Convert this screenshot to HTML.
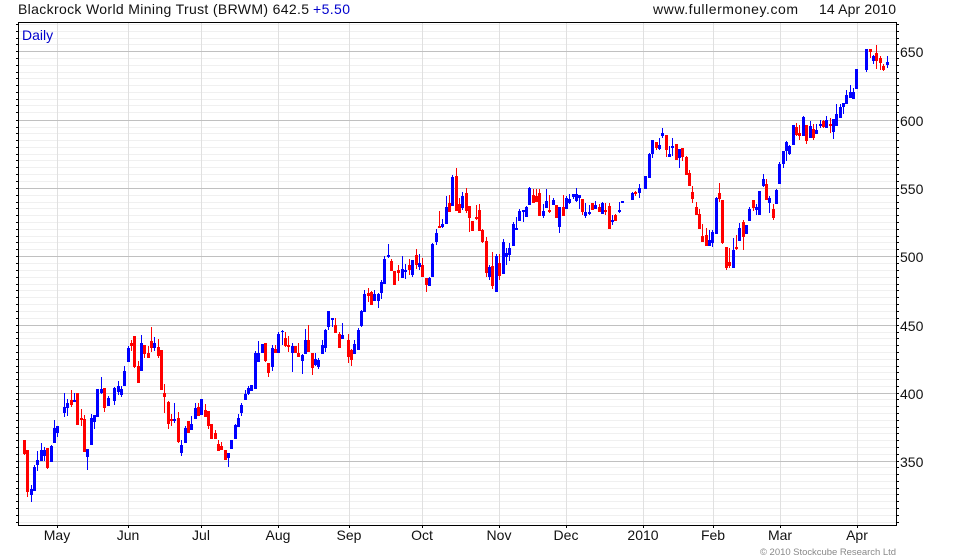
<!DOCTYPE html>
<html><head><meta charset="utf-8"><title>BRWM</title>
<style>html,body{margin:0;padding:0;background:#fff;width:980px;height:560px;overflow:hidden}svg{display:block}text{font-family:"Liberation Sans",Arial,sans-serif;font-size:14px;fill:#111}</style>
</head><body>
<svg width="980" height="560" viewBox="0 0 980 560" xmlns="http://www.w3.org/2000/svg">
<g shape-rendering="crispEdges" fill="none">
<path stroke="#f0f0f0" d="M19 24.5H896M19 31.5H896M19 38.5H896M19 44.5H896M19 58.5H896M19 65.5H896M19 72.5H896M19 78.5H896M19 85.5H896M19 92.5H896M19 99.5H896M19 105.5H896M19 112.5H896M19 127.5H896M19 133.5H896M19 140.5H896M19 147.5H896M19 154.5H896M19 160.5H896M19 167.5H896M19 174.5H896M19 181.5H896M19 195.5H896M19 202.5H896M19 208.5H896M19 215.5H896M19 222.5H896M19 229.5H896M19 236.5H896M19 242.5H896M19 249.5H896M19 263.5H896M19 270.5H896M19 277.5H896M19 284.5H896M19 290.5H896M19 297.5H896M19 304.5H896M19 311.5H896M19 318.5H896M19 332.5H896M19 338.5H896M19 345.5H896M19 352.5H896M19 359.5H896M19 366.5H896M19 372.5H896M19 379.5H896M19 386.5H896M19 399.5H896M19 406.5H896M19 413.5H896M19 420.5H896M19 427.5H896M19 433.5H896M19 440.5H896M19 447.5H896M19 454.5H896M19 467.5H896M19 474.5H896M19 481.5H896M19 488.5H896M19 494.5H896M19 501.5H896M19 508.5H896M19 515.5H896M19 522.5H896"/>
<path stroke="#e0e0e0" d="M57.5 23V525M128.5 23V525M201.5 23V525M278.5 23V525M349.5 23V525M422.5 23V525M499.5 23V525M566.5 23V525M643.5 23V525M713.5 23V525M780.5 23V525M857.5 23V525"/>
<path stroke="#c0c0c0" d="M19 51.5H896M19 120.5H896M19 188.5H896M19 256.5H896M19 325.5H896M19 393.5H896M19 461.5H896"/>
<path stroke="#000" d="M18 22.5H897M18 525.5H897M18.5 22V526M896.5 22V526"/>
<path stroke="#000" d="M16 24.5H18M16 31.5H18M16 38.5H18M16 44.5H18M16 51.5H18M16 58.5H18M16 65.5H18M16 72.5H18M16 78.5H18M16 85.5H18M16 92.5H18M16 99.5H18M16 105.5H18M16 112.5H18M16 120.5H18M16 127.5H18M16 133.5H18M16 140.5H18M16 147.5H18M16 154.5H18M16 160.5H18M16 167.5H18M16 174.5H18M16 181.5H18M16 188.5H18M16 195.5H18M16 202.5H18M16 208.5H18M16 215.5H18M16 222.5H18M16 229.5H18M16 236.5H18M16 242.5H18M16 249.5H18M16 256.5H18M16 263.5H18M16 270.5H18M16 277.5H18M16 284.5H18M16 290.5H18M16 297.5H18M16 304.5H18M16 311.5H18M16 318.5H18M16 325.5H18M16 332.5H18M16 338.5H18M16 345.5H18M16 352.5H18M16 359.5H18M16 366.5H18M16 372.5H18M16 379.5H18M16 386.5H18M16 393.5H18M16 399.5H18M16 406.5H18M16 413.5H18M16 420.5H18M16 427.5H18M16 433.5H18M16 440.5H18M16 447.5H18M16 454.5H18M16 461.5H18M16 467.5H18M16 474.5H18M16 481.5H18M16 488.5H18M16 494.5H18M16 501.5H18M16 508.5H18M16 515.5H18M16 522.5H18"/>
<path stroke="#000" d="M897 24.5H899M897 31.5H899M897 38.5H899M897 44.5H899M897 51.5H899M897 58.5H899M897 65.5H899M897 72.5H899M897 78.5H899M897 85.5H899M897 92.5H899M897 99.5H899M897 105.5H899M897 112.5H899M897 120.5H899M897 127.5H899M897 133.5H899M897 140.5H899M897 147.5H899M897 154.5H899M897 160.5H899M897 167.5H899M897 174.5H899M897 181.5H899M897 188.5H899M897 195.5H899M897 202.5H899M897 208.5H899M897 215.5H899M897 222.5H899M897 229.5H899M897 236.5H899M897 242.5H899M897 249.5H899M897 256.5H899M897 263.5H899M897 270.5H899M897 277.5H899M897 284.5H899M897 290.5H899M897 297.5H899M897 304.5H899M897 311.5H899M897 318.5H899M897 325.5H899M897 332.5H899M897 338.5H899M897 345.5H899M897 352.5H899M897 359.5H899M897 366.5H899M897 372.5H899M897 379.5H899M897 386.5H899M897 393.5H899M897 399.5H899M897 406.5H899M897 413.5H899M897 420.5H899M897 427.5H899M897 433.5H899M897 440.5H899M897 447.5H899M897 454.5H899M897 461.5H899M897 467.5H899M897 474.5H899M897 481.5H899M897 488.5H899M897 494.5H899M897 501.5H899M897 508.5H899M897 515.5H899M897 522.5H899"/>
<path stroke="#000" d="M57.5 526V528M128.5 526V528M201.5 526V528M278.5 526V528M349.5 526V528M422.5 526V528M499.5 526V528M566.5 526V528M643.5 526V528M713.5 526V528M780.5 526V528M857.5 526V528"/>

<path stroke="#ff0000" stroke-width="1" d="M24.5 440V455M27.5 450V497M47.5 448V469M71.5 390V407M77.5 393V425M81.5 409V426M84.5 415V452M104.5 388V412M131.5 340V351M134.5 336V368M138.5 361V383M144.5 345V358M148.5 346V358M151.5 327V352M158.5 339V358M161.5 350V390M164.5 384V413M168.5 401V429M171.5 414V426M178.5 412V443M188.5 421V433M198.5 403V416M205.5 404V417M208.5 411V429M211.5 424V439M215.5 430V439M218.5 440V451M221.5 442V450M225.5 450V460M265.5 343V362M268.5 363V377M275.5 345V353M285.5 332V347M288.5 336V352M295.5 346V353M298.5 343V357M308.5 325V352M312.5 353V375M335.5 318V333M339.5 332V348M348.5 334V363M351.5 349V366M368.5 288V302M371.5 291V305M391.5 259V271M394.5 271V285M398.5 265V281M409.5 259V275M416.5 249V269M422.5 258V277M426.5 278V292M439.5 211V228M449.5 195V212M456.5 168V211M459.5 198V213M466.5 188V213M469.5 206V232M472.5 221V231M476.5 205V220M479.5 204V231M482.5 229V243M486.5 237V277M492.5 252V289M499.5 254V280M533.5 189V203M536.5 189V202M539.5 189V216M549.5 195V213M556.5 205V218M563.5 195V216M582.5 199V215M592.5 203V210M599.5 204V212M605.5 203V215M609.5 203V229M615.5 214V221M635.5 191V196M656.5 142V150M666.5 135V157M676.5 144V160M682.5 148V161M686.5 156V175M689.5 170V186M692.5 186V203M696.5 202V215M699.5 209V229M702.5 224V242M706.5 228V246M719.5 183V202M722.5 200V244M726.5 247V270M729.5 248V268M736.5 235V250M743.5 220V250M753.5 200V211M766.5 179V200M773.5 204V220M796.5 123V136M799.5 125V140M806.5 125V144M813.5 124V140M823.5 120V128M830.5 118V133M870.5 49V58M876.5 45V69M880.5 56V70M883.5 64V71"/>
<path stroke="#ff0000" stroke-width="3" d="M24.5 440V454M27.5 450V492M47.5 448V468M71.5 400V405M77.5 393V425M81.5 418V420M84.5 419V452M104.5 388V408M131.5 343V346M134.5 336V367M138.5 366V383M144.5 345V354M148.5 353V358M151.5 341V348M158.5 347V356M161.5 350V390M164.5 393V397M168.5 402V424M171.5 419V421M178.5 418V442M188.5 421V433M198.5 407V416M205.5 410V417M208.5 411V426M211.5 424V439M215.5 433V439M218.5 444V451M221.5 446V450M225.5 450V460M265.5 343V361M268.5 363V373M275.5 349V353M285.5 338V346M288.5 345V347M295.5 346V353M298.5 353V357M308.5 340V352M312.5 353V368M335.5 325V333M339.5 334V348M348.5 340V357M351.5 350V360M368.5 293V296M371.5 292V305M391.5 261V271M394.5 271V285M398.5 270V273M409.5 265V270M416.5 255V265M422.5 265V277M426.5 278V285M439.5 226V228M449.5 203V212M456.5 176V211M459.5 204V213M466.5 193V211M469.5 206V218M472.5 221V231M476.5 217V219M479.5 210V231M482.5 230V242M486.5 241V273M492.5 266V286M499.5 263V276M533.5 195V203M536.5 196V202M539.5 193V216M549.5 210V212M556.5 205V218M563.5 207V216M582.5 199V212M592.5 203V210M599.5 207V212M605.5 210V212M609.5 206V229M615.5 215V221M635.5 192V194M656.5 142V148M666.5 135V150M676.5 144V160M682.5 148V157M686.5 157V175M689.5 173V186M692.5 192V199M696.5 207V215M699.5 214V229M702.5 236V242M706.5 235V246M719.5 193V199M722.5 200V243M726.5 247V268M729.5 262V266M736.5 247V249M743.5 222V237M753.5 200V208M766.5 184V200M773.5 209V218M796.5 127V135M799.5 133V136M806.5 125V141M813.5 129V138M823.5 121V127M830.5 124V126M870.5 49V52M876.5 53V61M880.5 58V63M883.5 66V70"/>
<path stroke="#0000ff" stroke-width="1" d="M31.5 485V502M34.5 465V491M37.5 451V471M41.5 443V461M44.5 447V461M51.5 445V462M54.5 420V443M57.5 426V437M64.5 393V417M67.5 399V416M74.5 393V402M87.5 449V470M91.5 414V445M94.5 415V429M97.5 389V417M101.5 377V394M108.5 396V406M114.5 387V405M118.5 381V395M121.5 386V397M124.5 366V386M128.5 346V362M141.5 335V371M154.5 337V351M174.5 403V423M181.5 440V456M185.5 426V443M191.5 416V430M195.5 403V419M201.5 399V415M228.5 453V467M231.5 440V449M235.5 424V439M238.5 414V427M241.5 403V416M245.5 390V400M248.5 386V395M251.5 385V391M255.5 351V389M258.5 341V362M262.5 344V353M272.5 345V371M278.5 332V353M282.5 330V345M292.5 343V372M302.5 354V374M305.5 329V354M315.5 353V366M318.5 358V369M322.5 340V354M325.5 329V352M328.5 311V330M332.5 318V327M342.5 323V339M354.5 340V354M358.5 328V350M361.5 310V327M364.5 290V312M374.5 290V301M378.5 293V308M381.5 280V299M384.5 256V284M388.5 244V258M402.5 256V278M405.5 264V279M412.5 260V277M419.5 254V270M429.5 277V286M432.5 243V277M436.5 229V245M442.5 219V228M446.5 196V224M452.5 175V206M462.5 192V210M489.5 265V280M496.5 254V292M503.5 239V274M506.5 248V265M509.5 243V261M513.5 222V246M516.5 217V230M519.5 209V221M523.5 210V222M526.5 206V217M529.5 187V205M543.5 204V218M546.5 189V208M553.5 198V205M559.5 207V233M566.5 196V209M569.5 194V204M573.5 194V199M576.5 188V202M579.5 195V209M585.5 203V218M589.5 205V215M595.5 201V209M602.5 202V214M612.5 215V225M619.5 202V213M622.5 201V203M632.5 192V200M639.5 184V198M645.5 176V189M649.5 153V178M652.5 140V158M659.5 138V150M662.5 128V138M669.5 146V157M672.5 138V156M679.5 149V168M709.5 230V246M712.5 230V247M716.5 197V234M733.5 238V268M739.5 223V241M746.5 225V234M749.5 207V221M756.5 204V215M759.5 191V215M763.5 174V187M769.5 196V213M776.5 189V204M779.5 162V184M783.5 151V168M786.5 141V161M789.5 145V155M793.5 125V145M803.5 116V136M810.5 121V138M816.5 124V134M820.5 120V128M826.5 116V128M833.5 119V139M836.5 104V126M840.5 104V118M843.5 103V114M846.5 90V104M850.5 85V98M853.5 88V99M856.5 69V89M866.5 49V72M873.5 55V64M887.5 56V68"/>
<path stroke="#0000ff" stroke-width="3" d="M31.5 489V495M34.5 467V491M37.5 460V465M41.5 450V461M44.5 450V456M51.5 446V462M54.5 428V443M57.5 426V433M64.5 407V413M67.5 403V408M74.5 400V402M87.5 449V457M91.5 418V445M94.5 415V422M97.5 389V417M101.5 389V393M108.5 398V406M114.5 388V401M118.5 386V392M121.5 389V395M124.5 371V386M128.5 348V362M141.5 343V371M154.5 343V348M174.5 419V421M181.5 445V453M185.5 428V443M191.5 424V430M195.5 408V419M201.5 399V415M228.5 453V458M231.5 440V449M235.5 425V439M238.5 418V427M241.5 405V413M245.5 394V400M248.5 388V394M251.5 385V391M255.5 353V389M258.5 353V362M262.5 344V353M272.5 348V367M278.5 334V353M282.5 331V332M292.5 346V353M302.5 355V361M305.5 340V354M315.5 359V365M318.5 360V367M322.5 345V354M325.5 330V348M328.5 311V327M332.5 318V320M342.5 335V339M354.5 344V354M358.5 330V350M361.5 311V326M364.5 294V312M374.5 294V301M378.5 294V301M381.5 282V293M384.5 259V284M388.5 255V257M402.5 269V278M405.5 270V272M412.5 260V275M419.5 263V267M429.5 278V286M432.5 244V277M436.5 233V242M442.5 224V227M446.5 207V224M452.5 177V206M462.5 196V208M489.5 267V277M496.5 256V292M503.5 242V274M506.5 253V257M509.5 248V255M513.5 224V246M516.5 228V230M519.5 211V221M523.5 210V212M526.5 207V217M529.5 188V205M543.5 211V216M546.5 201V208M553.5 200V205M559.5 207V227M566.5 198V209M569.5 199V203M573.5 194V197M576.5 194V201M579.5 195V198M585.5 212V216M589.5 212V214M595.5 205V209M602.5 203V214M612.5 220V222M619.5 210V212M622.5 201V203M632.5 193V200M639.5 188V193M645.5 176V189M649.5 154V178M652.5 140V154M659.5 145V149M662.5 133V136M669.5 154V157M672.5 146V148M679.5 149V158M709.5 240V246M712.5 232V243M716.5 198V234M733.5 250V268M739.5 228V241M746.5 225V234M749.5 209V221M756.5 207V210M759.5 191V215M763.5 179V186M769.5 198V203M776.5 190V204M779.5 164V184M783.5 151V164M786.5 142V151M789.5 146V154M793.5 125V145M803.5 117V136M810.5 126V138M816.5 130V134M820.5 124V126M826.5 120V128M833.5 119V132M836.5 114V126M840.5 107V118M843.5 103V107M846.5 95V104M850.5 92V98M853.5 92V99M856.5 69V89M866.5 49V70M873.5 56V61M887.5 62V65"/>
</g>
<text x="18" y="14" textLength="291" lengthAdjust="spacing">Blackrock World Mining Trust (BRWM) 642.5</text>
<text x="313" y="14" textLength="37" lengthAdjust="spacing" style="fill:#0000cc">+5.50</text>
<text x="653" y="14" textLength="145" lengthAdjust="spacing">www.fullermoney.com</text>
<text x="819" y="14" textLength="77" lengthAdjust="spacing">14 Apr 2010</text>
<text x="22" y="40" style="fill:#0000cc">Daily</text>
<text x="900" y="57">650</text>
<text x="900" y="126">600</text>
<text x="900" y="194">550</text>
<text x="900" y="262">500</text>
<text x="900" y="331">450</text>
<text x="900" y="399">400</text>
<text x="900" y="467">350</text>
<text x="57" y="540" text-anchor="middle">May</text>
<text x="128" y="540" text-anchor="middle">Jun</text>
<text x="201" y="540" text-anchor="middle">Jul</text>
<text x="278" y="540" text-anchor="middle">Aug</text>
<text x="349" y="540" text-anchor="middle">Sep</text>
<text x="422" y="540" text-anchor="middle">Oct</text>
<text x="499" y="540" text-anchor="middle">Nov</text>
<text x="566" y="540" text-anchor="middle">Dec</text>
<text x="643" y="540" text-anchor="middle">2010</text>
<text x="713" y="540" text-anchor="middle">Feb</text>
<text x="780" y="540" text-anchor="middle">Mar</text>
<text x="857" y="540" text-anchor="middle">Apr</text>
<text x="760" y="555" textLength="136" lengthAdjust="spacing" style="font-size:9.5px;fill:#8a8a8a">© 2010 Stockcube Research Ltd</text>
</svg>
</body></html>
